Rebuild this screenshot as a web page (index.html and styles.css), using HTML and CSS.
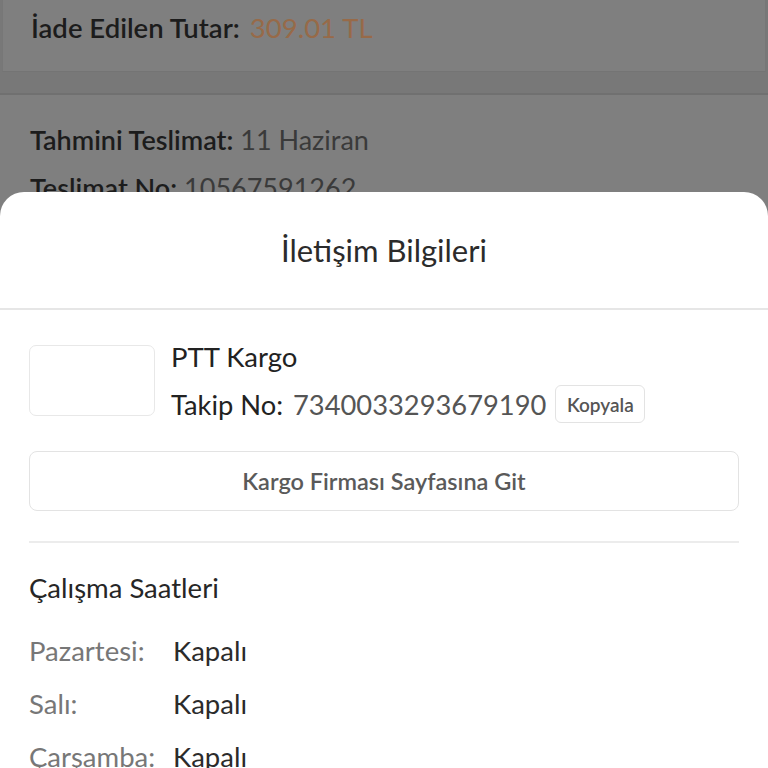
FILE: index.html
```html
<!doctype html>
<html>
 <head>
  <meta charset="utf-8">
  <link rel="stylesheet" href="styles.css">
 </head>
 <body>
  <div class="fondo">
   <div class="tarjeta tarjeta-iade">
    <span class="etiqueta">İade Edilen Tutar:</span> <span class="tutar">309.01 TL</span>
   </div>
   <div class="tarjeta tarjeta-teslimat">
    <p><span class="etiqueta">Tahmini Teslimat:</span> <span class="valor">11 Haziran</span></p>
    <p><span class="etiqueta">Teslimat No:</span> <span class="valor">10567591262</span></p>
   </div>
  </div>

  <div class="hoja">
   <div class="hoja-titulo">İletişim Bilgileri</div>

   <div class="hoja-cuerpo">
    <div class="kargo">
     <div class="kargo-logo"></div>
     <div class="kargo-info">
      <div class="kargo-nombre">PTT Kargo</div>
      <div class="kargo-takip">
       <span class="takip-label">Takip No:</span>
       <span class="takip-no">7340033293679190</span>
       <button class="btn-kopyala">Kopyala</button>
      </div>
     </div>
    </div>

    <button class="btn-firma">Kargo Firması Sayfasına Git</button>

    <div class="saatler">
     <h3>Çalışma Saatleri</h3>
     <div class="fila"><span class="dia">Pazartesi:</span><span class="estado">Kapalı</span></div>
     <div class="fila"><span class="dia">Salı:</span><span class="estado">Kapalı</span></div>
     <div class="fila"><span class="dia">Çarşamba:</span><span class="estado">Kapalı</span></div>
    </div>
   </div>
  </div>
 </body>
</html>
```

FILE: styles.css
```css
html, body {
    margin: 0;
    padding: 0;
    height: 100%;
    overflow: hidden;
}
body {
    position: relative;
    font-family: Lato, "Noto Sans", sans-serif;
    background-color: #787878; /* fondo atenuado */
    color: #1b1b1b;
}

/* Contenido detras del panel (ya oscurecido) */
.fondo {
    height: 100%;
}
.tarjeta {
    background-color: #7f7f7f;
    padding: 0 30px;
    box-sizing: border-box;
}
.tarjeta-iade {
    height: 72px;
    margin: 0 2px;
    padding: 0 28px;
    border-bottom: 1px solid #747474;
    border-left: 1px solid #777;
    border-right: 1px solid #777;
    font-size: 27.5px;
    line-height: 56px;
}
.tarjeta-teslimat {
    margin-top: 21px;
    border-top: 2px solid #707070;
    padding-top: 29px;
    height: 400px;
    font-size: 27px;
}
.tarjeta-teslimat p {
    margin: 0 0 17px;
    line-height: 31px;
}
.etiqueta {
    font-weight: 600;
    color: #1c1c1c;
}
.tarjeta-iade .tutar {
    margin-left: 3px;
}
.tutar {
    color: #976a48;
}
.valor {
    color: #3a3a3a;
}

/* Panel inferior */
.hoja {
    position: absolute;
    left: 0;
    right: 0;
    top: 192px;
    bottom: 0;
    background-color: #fff;
    border-radius: 24px 24px 0 0;
}
.hoja-titulo {
    height: 116px;
    line-height: 116px;
    text-align: center;
    font-size: 31px;
    color: #2b2b2b;
    border-bottom: 2px solid #e6e6e6;
}
.hoja-cuerpo {
    padding: 35px 29px 0;
}

.kargo {
    display: flex;
    gap: 16px;
}
.kargo-logo {
    width: 126px;
    height: 71px;
    border: 1px solid #e8e8e8;
    border-radius: 7px;
    box-sizing: border-box;
}
.kargo-info {
    display: flex;
    flex-direction: column;
}
.kargo-nombre {
    font-size: 27.5px;
    color: #222;
    line-height: 24px;
}
.kargo-takip {
    display: flex;
    align-items: center;
    margin-top: 16px;
    font-size: 27.3px;
}
.takip-label {
    color: #222;
}
.takip-no {
    color: #555;
    margin-left: 10px;
}
.btn-kopyala {
    margin-left: 9px;
    width: 90px;
    height: 38px;
    padding: 0;
    background: #fff;
    border: 1px solid #e3e3e3;
    border-radius: 6px;
    font-family: inherit;
    font-size: 19px;
    font-weight: 600;
    color: #555;
}

.btn-firma {
    display: block;
    width: 100%;
    height: 60px;
    margin-top: 28px;
    background: #fff;
    border: 1px solid #e3e3e3;
    border-radius: 8px;
    font-family: inherit;
    font-size: 23.5px;
    font-weight: 600;
    color: #5a5a5a;
}

.saatler {
    margin-top: 30px;
    border-top: 2px solid #ececec;
}
.saatler h3 {
    margin: 27px 0 27px;
    font-size: 27.5px;
    font-weight: 400;
    color: #262626;
    line-height: 36px;
}
.fila {
    display: flex;
    font-size: 27.5px;
    line-height: 36px;
    margin-bottom: 17px;
}
.dia {
    width: 144px;
    color: #777;
}
.estado {
    color: #2b2b2b;
}
```
